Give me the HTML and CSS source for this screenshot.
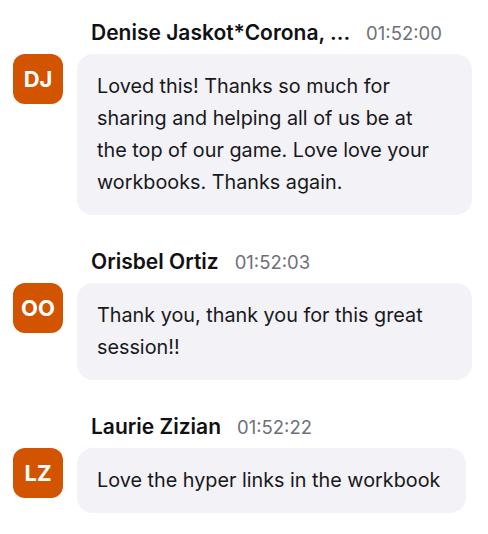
FILE: index.html
```html
<!DOCTYPE html>
<html>
<head>
<meta charset="utf-8">
<link rel="stylesheet" href="styles.css">
</head>
<body>
<div class="chat">
  <div class="message">
    <div class="header"><span class="name">Denise Jaskot*Corona, ...</span><span class="time">01:52:00</span></div>
    <div class="avatar">DJ</div>
    <div class="bubble">Loved this! Thanks so much for sharing and helping all of us be at the top of our game. Love love your workbooks. Thanks again.</div>
  </div>
  <div class="message">
    <div class="header"><span class="name">Orisbel Ortiz</span><span class="time">01:52:03</span></div>
    <div class="avatar">OO</div>
    <div class="bubble">Thank you, thank you for this great session!!</div>
  </div>
  <div class="message">
    <div class="header"><span class="name">Laurie Zizian</span><span class="time">01:52:22</span></div>
    <div class="avatar">LZ</div>
    <div class="bubble">Love the hyper links in the workbook</div>
  </div>
</div>
</body>
</html>
```
FILE: styles.css
```css
html, body {
  margin: 0;
  padding: 0;
  background: #ffffff;
}
body {
  font-family: Inter, "Noto Sans", sans-serif;
  color: #18181b;
}
.chat {
  display: flex;
  flex-direction: column;
  gap: 34px;
  padding: 20px 16px 0 13px;
}
.message {
  display: grid;
  grid-template-columns: 50px minmax(0, 395px);
  column-gap: 14px;
  row-gap: 8px;
  align-items: start;
}
.header {
  grid-column: 2;
  display: flex;
  align-items: baseline;
  gap: 16px;
  padding-left: 14px;
  line-height: 26px;
}
.name {
  font-size: 21px;
  font-weight: 600;
  color: #111113;
}
.time {
  font-size: 18.5px;
  color: #6e717a;
}
.avatar {
  grid-column: 1;
  width: 50px;
  height: 50px;
  border-radius: 12px;
  background: #d35400;
  color: #ffffff;
  font-weight: 700;
  font-size: 22px;
  display: flex;
  align-items: center;
  justify-content: center;
}
.bubble {
  grid-column: 2;
  justify-self: start;
  background: #f2f2f7;
  border-radius: 16px;
  padding: 16px 26px 17px 20px;
  font-size: 19.8px;
  line-height: 32px;
  color: #18181b;
}
```
